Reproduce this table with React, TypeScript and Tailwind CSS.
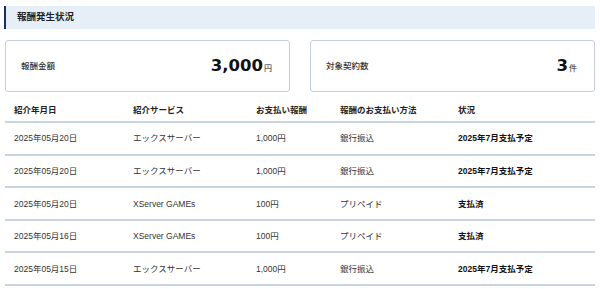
import React from 'react';

type Row = {
  date: string;
  service: string;
  amount: string;
  method: string;
  status: string;
};

const rows: Row[] = [
  { date: '2025年05月20日', service: 'エックスサーバー', amount: '1,000円', method: '銀行振込', status: '2025年7月支払予定' },
  { date: '2025年05月20日', service: 'エックスサーバー', amount: '1,000円', method: '銀行振込', status: '2025年7月支払予定' },
  { date: '2025年05月20日', service: 'XServer GAMEs', amount: '100円', method: 'プリペイド', status: '支払済' },
  { date: '2025年05月16日', service: 'XServer GAMEs', amount: '100円', method: 'プリペイド', status: '支払済' },
  { date: '2025年05月15日', service: 'エックスサーバー', amount: '1,000円', method: '銀行振込', status: '2025年7月支払予定' },
];

const cols = 'grid grid-cols-[119px_123px_84px_118px_1fr] items-center pl-[9px]';

const SummaryCard: React.FC<{ label: string; value: string; unit: string }> = ({ label, value, unit }) => (
  <div className="flex h-[52px] items-center justify-between rounded-[3px] border border-[#c5cfdc] bg-white pl-[15px] pr-[17px]">
    <span className="text-[8.5px] font-medium text-[#333]">{label}</span>
    <span className="flex items-baseline">
      <span className="font-['DejaVu_Sans',sans-serif] text-[16.5px] font-bold leading-none text-[#111]">{value}</span>
      <span className="ml-[1px] text-[8px] text-[#222]">{unit}</span>
    </span>
  </div>
);

export default function App() {
  return (
    <div className="h-[289px] w-[600px] overflow-hidden bg-white pl-[4px] pr-[5px] pt-[6px] font-['Liberation_Sans','Noto_Sans_CJK_JP',sans-serif] text-[#333]">
      <div className="flex h-[23px] items-center border-l-2 border-[#1d2d5c] bg-[#e6eef8] pl-[11px] text-[9.5px] font-bold text-[#222]">
        報酬発生状況
      </div>

      <div className="ml-[1px] mt-[11px] grid grid-cols-2 gap-[20px]">
        <SummaryCard label="報酬金額" value="3,000" unit="円" />
        <SummaryCard label="対象契約数" value="3" unit="件" />
      </div>

      <div className="ml-[1px] mt-[8px] text-[8.5px]">
        <div className={`${cols} h-[23px] border-b-2 border-[#c9d4e2] font-bold text-[#222]`}>
          <span>紹介年月日</span>
          <span>紹介サービス</span>
          <span>お支払い報酬</span>
          <span>報酬のお支払い方法</span>
          <span>状況</span>
        </div>
        {rows.map((r, i) => (
          <div key={i} className={`${cols} h-[32.6px] border-b-2 border-[#c9d4e2] pt-[1px]`}>
            <span>{r.date}</span>
            <span>{r.service}</span>
            <span>{r.amount}</span>
            <span>{r.method}</span>
            <span className="font-bold text-[#111]">{r.status}</span>
          </div>
        ))}
      </div>
    </div>
  );
}
